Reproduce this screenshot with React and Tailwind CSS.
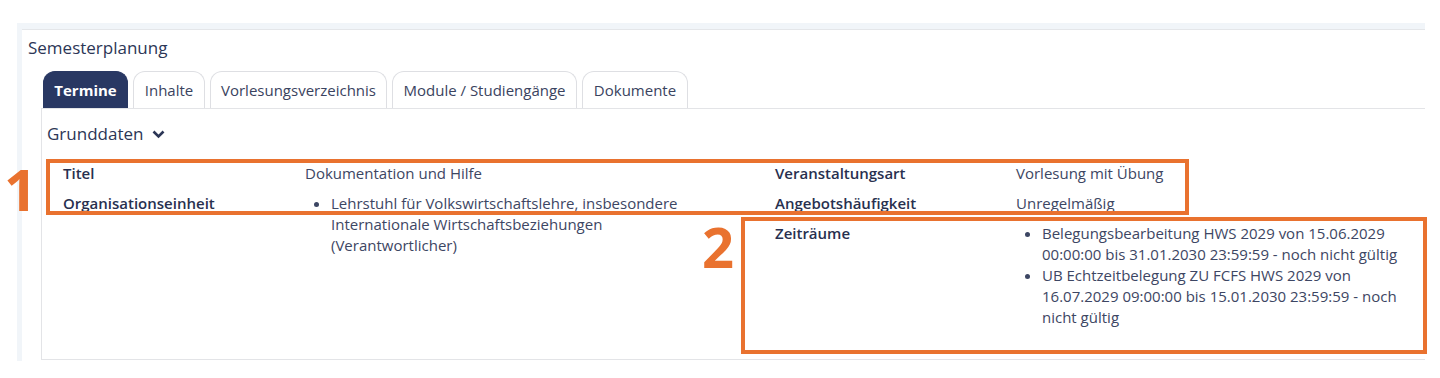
import React from 'react';

// Semesterplanung - Termine tab with Grunddaten block and two orange callout boxes
const TABS = [
  { label: 'Termine', w: 'w-[85px]', active: true },
  { label: 'Inhalte', w: 'w-[72px]' },
  { label: 'Vorlesungsverzeichnis', w: 'w-[177px]' },
  { label: 'Module / Studiengänge', w: 'w-[185px]' },
  { label: 'Dokumente', w: 'w-[106px]' },
];

const labelClass = "font-semibold text-[#28304f] py-[4.5px]";
const valueClass = "text-[#3d4663] py-[4.5px]";

const App = () => {
  return (
    <div className="relative w-[1440px] h-[378px] overflow-hidden bg-white font-['Open_Sans',sans-serif] text-[15px] leading-[21px]">
      <div className="pt-[23px] pl-[17px] pr-[15px]">
        {/* Outer panel */}
        <div className="h-[338px] border-t-[6px] border-l-[5px] border-[#f1f5f9] bg-white">
          <div className="h-full border-t border-[#e4e6e9] pl-[6px]">
            <h2 className="pt-[6px] text-[17px] leading-[23px] text-[#2c3656]">Semesterplanung</h2>

            {/* Tabs */}
            <div className="mt-[12px] flex gap-[5px] pl-[15px]">
              {TABS.map(t => (
                <div
                  key={t.label}
                  className={`${t.w} h-[37px] flex items-center justify-center rounded-t-[12px] border border-b-0 ${
                    t.active
                      ? 'bg-[#293863] border-[#293863] text-white font-bold'
                      : 'bg-white border-[#dedfe3] text-[#3a4360]'
                  }`}
                >
                  {t.label}
                </div>
              ))}
            </div>

            {/* Content panel */}
            <div className="ml-[13px] h-[252px] border border-[#e3e4e7] border-r-0 bg-white">
              <div className="pt-[14px] pl-[5px] flex items-center gap-[9px] text-[17px] leading-[22px] text-[#2c3656]">
                Grunddaten
                <svg width="13" height="9" viewBox="0 0 13 9">
                  <path d="M1.5 1.5 L6.5 6.5 L11.5 1.5" fill="none" stroke="#2c3656" strokeWidth="2.6" />
                </svg>
              </div>

              <div className="mt-[13px] flex pl-[21px]">
                {/* Left half */}
                <div className="w-[712px] grid grid-cols-[242px_1fr] content-start">
                  <div className={labelClass}>Titel</div>
                  <div className={valueClass}>Dokumentation und Hilfe</div>
                  <div className={labelClass}>Organisationseinheit</div>
                  <ul className={`${valueClass} list-disc pl-[26px] pr-[74px]`}>
                    <li>Lehrstuhl für Volkswirtschaftslehre, insbesondere Internationale Wirtschaftsbeziehungen (Verantwortlicher)</li>
                  </ul>
                </div>

                {/* Right half */}
                <div className="w-[639px] grid grid-cols-[241px_1fr] content-start">
                  <div className={labelClass}>Veranstaltungsart</div>
                  <div className={valueClass}>Vorlesung mit Übung</div>
                  <div className={labelClass}>Angebotshäufigkeit</div>
                  <div className={valueClass}>Unregelmäßig</div>
                  <div className={labelClass}>Zeiträume</div>
                  <ul className={`${valueClass} list-disc pl-[26px]`}>
                    <li>Belegungsbearbeitung HWS 2029 von 15.06.2029 00:00:00 bis 31.01.2030 23:59:59 - noch nicht gültig</li>
                    <li>UB Echtzeitbelegung ZU FCFS HWS 2029 von 16.07.2029 09:00:00 bis 15.01.2030 23:59:59 - noch nicht gültig</li>
                  </ul>
                </div>
              </div>
            </div>
          </div>
        </div>
      </div>

      {/* Annotation overlays */}
      <div className="absolute left-[46px] top-[159px] w-[1143px] h-[56px] border-[4px] border-[#e9722f]" />
      <div className="absolute left-[741px] top-[217px] w-[686px] h-[137px] border-[4px] border-[#e9722f]" />
      <div className="absolute left-[4px] top-[155px] text-[58px] leading-[68px] font-bold text-[#e9722f]">1</div>
      <div className="absolute left-[702px] top-[213px] text-[56px] leading-[66px] font-bold text-[#e9722f]">2</div>
    </div>
  );
};

export default App;
